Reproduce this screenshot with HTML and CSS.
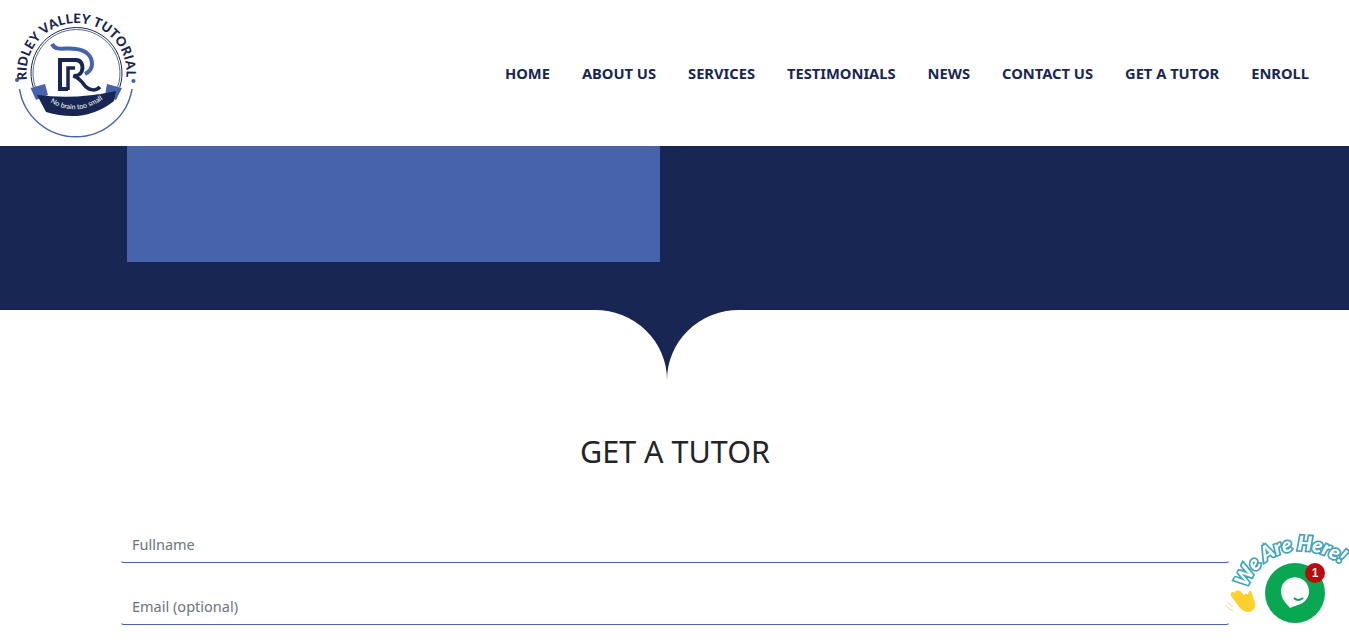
FILE: index.html
```html
<!DOCTYPE html>
<html lang="en">
<head>
    <meta charset="UTF-8">
    <meta name="viewport" content="width=device-width, initial-scale=1.0">
    <title>Get a Tutor</title>
    <link rel="stylesheet" href="styles.css">
</head>
<body>
    <header class="site-header">
        <a class="logo" href="#">
            <svg viewBox="0 0 160 146" width="160" height="146">
                <defs>
                    <path id="logoArc" d="M27 80 A50 50 0 1 1 126 80"></path>
                    <path id="bannerArc" d="M47 100 Q76 120 106 97"></path>
                </defs>
                <text class="logo-name"><textPath href="#logoArc" textLength="168" lengthAdjust="spacing">RIDLEY VALLEY TUTORIAL</textPath></text>
                <circle cx="17" cy="80" r="2" fill="#3f5ea8"></circle>
                <circle cx="133.500" cy="81" r="2" fill="#3f5ea8"></circle>
                <path d="M33.200 87 A45.500 45.500 0 1 1 119.800 87" fill="none" stroke="#182653" stroke-width="1"></path>
                <path d="M35.300 87 A43.500 43.500 0 1 1 117.700 87" fill="none" stroke="#182653" stroke-width="0.700"></path>
                <path d="M19.500 89 A57 57 0 0 0 132 89" fill="none" stroke="#4663ab" stroke-width="1.500"></path>
                <path d="M30.500 88 L45 84 L48 95 L36 100Z" fill="#4663ab"></path>
                <path d="M122 88 L107 84 L105 95 L116 100Z" fill="#4663ab"></path>
                <path d="M37 95 Q76 100 116 91 L114 101 Q85 124 46 112Z" fill="#182653"></path>
                <text class="logo-tag"><textPath href="#bannerArc" startOffset="50%" text-anchor="middle">No brain too small</textPath></text>
                <path d="M52 44 C56 52 66 47 76 49 C86 50 92 56 92 64 C92 69 89 72 85 74" fill="none" stroke="#4663ab" stroke-width="4"></path>
                <path d="M68 89 H60 V60 H76 C85 60 85 76 74 76" fill="none" stroke="#182653" stroke-width="4"></path>
                <path d="M68 90 V68 H75 M73 76 C79 77 82 82 85 86 C90 91 96 91 100 87" fill="none" stroke="#182653" stroke-width="3.500"></path>
            </svg>
        </a>
        <nav class="main-nav">
            <a href="#">HOME</a>
            <a href="#">ABOUT US</a>
            <a href="#">SERVICES</a>
            <a href="#">TESTIMONIALS</a>
            <a href="#">NEWS</a>
            <a href="#">CONTACT US</a>
            <a href="#">GET A TUTOR</a>
            <a href="#">ENROLL</a>
        </nav>
    </header>

    <section class="hero">
        <div class="hero-box"></div>
    </section>

    <svg class="hero-drop" viewBox="0 0 144 70" width="144" height="70">
        <path d="M0 0 A72 70 0 0 1 72 70 A72 70 0 0 1 144 0Z" fill="#182653"></path>
    </svg>

    <main class="tutor-form">
        <h1>GET A TUTOR</h1>
        <form>
            <input type="text" placeholder="Fullname">
            <input type="email" placeholder="Email (optional)">
        </form>
    </main>

    <aside class="chat-widget">
        <svg viewBox="0 0 149 123" width="149" height="123">
            <defs>
                <path id="chatArc" d="M47 68 C56 38 98 14 141 44 L150 52"></path>
            </defs>
            <text class="chat-label"><textPath href="#chatArc" textLength="113" lengthAdjust="spacing">We Are Here!</textPath></text>
            <path d="M31 76 C30 72 33 71 35 73 C35 70 39 70 41 72 L44 75 C46 73 47 74 48 75 C48 72 50 70 51 71 C52 73 53 77 54 80 C57 86 54 92 48 92 C43 92 40 88 37 84Z" fill="#fdd02b"></path>
            <path d="M25 85 Q28 89 33 91 M28 82 Q30 85 33 87" fill="none" stroke="#f3dc8a" stroke-width="1"></path>
            <circle cx="95" cy="73" r="30" fill="#0aa753"></circle>
            <path d="M90 88 C88 85 81 80 81 71 A14 14 0 1 1 98 85 C95 86 92 87 90 88Z" fill="#fff"></path>
            <path d="M94 78 Q98 82 103 78" fill="none" stroke="#0aa753" stroke-width="2"></path>
            <circle cx="115" cy="53" r="10" fill="#b80d0d"></circle>
            <text class="chat-count" x="115" y="57" text-anchor="middle">1</text>
        </svg>
    </aside>
</body>
</html>
```
FILE: styles.css
```css
body {
    font-family: 'Noto Sans', 'Open Sans', sans-serif;
    margin: 0;
    padding: 0;
    background-color: #fff;
    color: #212529;
}

.site-header {
    height: 146px;
    display: flex;
    justify-content: space-between;
    align-items: center;
    padding-right: 40px;
}

.logo,
.logo svg {
    display: block;
}

.logo-name {
    font-family: 'Lato', sans-serif;
    font-size: 13px;
    font-weight: 900;
    fill: #182653;
}

.logo-tag {
    font-family: 'Lato', sans-serif;
    font-size: 7px;
    fill: #fff;
}

.main-nav {
    display: flex;
    gap: 32px;
}

.main-nav a {
    font-size: 14.7px;
    font-weight: 700;
    color: #182653;
    text-decoration: none;
}

.hero {
    height: 164px;
    background-color: #182653;
    padding-left: 127px;
}

.hero-box {
    width: 533px;
    height: 116px;
    background-color: #4663ab;
}

.hero-drop {
    display: block;
    margin-left: 595px;
}

.tutor-form {
    padding: 0 119px 0 120px;
}

.tutor-form h1 {
    margin: 49px 0 52px;
    font-size: 30.5px;
    font-weight: 400;
    line-height: 44px;
    text-align: center;
}

.tutor-form form {
    display: flex;
    flex-direction: column;
    gap: 24px;
}

.tutor-form input {
    height: 38px;
    box-sizing: border-box;
    padding: 6px 11px;
    font-family: inherit;
    font-size: 14.5px;
    border: 1px solid transparent;
    border-bottom-color: #4663ab;
    border-radius: 4px;
    outline: none;
}

.tutor-form input::placeholder {
    color: #6c757d;
    opacity: 1;
}

.chat-widget {
    position: fixed;
    right: 0;
    bottom: 0;
    width: 149px;
    height: 123px;
}

.chat-label {
    font-family: 'Lato', sans-serif;
    font-size: 20px;
    font-weight: 900;
    font-style: italic;
    fill: #fff;
    stroke: #45a6bb;
    stroke-width: 3.5px;
    paint-order: stroke;
}

.chat-count {
    font-family: 'Liberation Sans', sans-serif;
    font-size: 12px;
    font-weight: 700;
    fill: #fff;
}
```
